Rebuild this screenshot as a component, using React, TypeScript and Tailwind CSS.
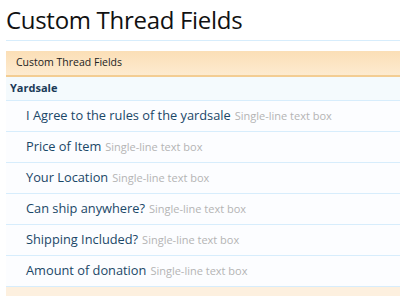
const fields = [
  'I Agree to the rules of the yardsale',
  'Price of Item',
  'Your Location',
  'Can ship anywhere?',
  'Shipping Included?',
  'Amount of donation',
];

export default function App() {
  return (
    <main
      className="w-[400px] h-[296px] overflow-hidden bg-white pl-[6px]"
      style={{ fontFamily: '"Open Sans", "DejaVu Sans", sans-serif' }}
    >
      <h1 className="pt-[5px] h-[40px] text-[24px] leading-[30px] text-[#111] tracking-[-0.3px]">
        Custom Thread Fields
      </h1>
      <div className="border-t border-[#d7edfc] pt-[10px]">
        <div className="h-[26px] flex items-center pl-[10px] text-[10.5px] text-[#222] bg-gradient-to-b from-[#fbdfb6] to-[#fdebd0] border-b-2 border-[#f3cd93]">
          Custom Thread Fields
        </div>
        <div className="h-[24px] flex items-center pl-[4px] text-[11px] font-bold text-[#1a3a58] bg-[#f4fafd] border-b border-[#d7edfc]">
          Yardsale
        </div>
        {fields.map((f) => (
          <div
            key={f}
            className="h-[31px] flex items-center pl-[20px] border-b border-[#d7edfc] bg-[#fcfdff]"
          >
            <span className="text-[12.8px] font-medium text-[#1a4767]">{f}</span>
            <span className="ml-[4px] text-[11px] text-[#b4b4b4]">Single-line text box</span>
          </div>
        ))}
        <div className="h-[12px] bg-[#fdf0df]" />
      </div>
    </main>
  );
}
